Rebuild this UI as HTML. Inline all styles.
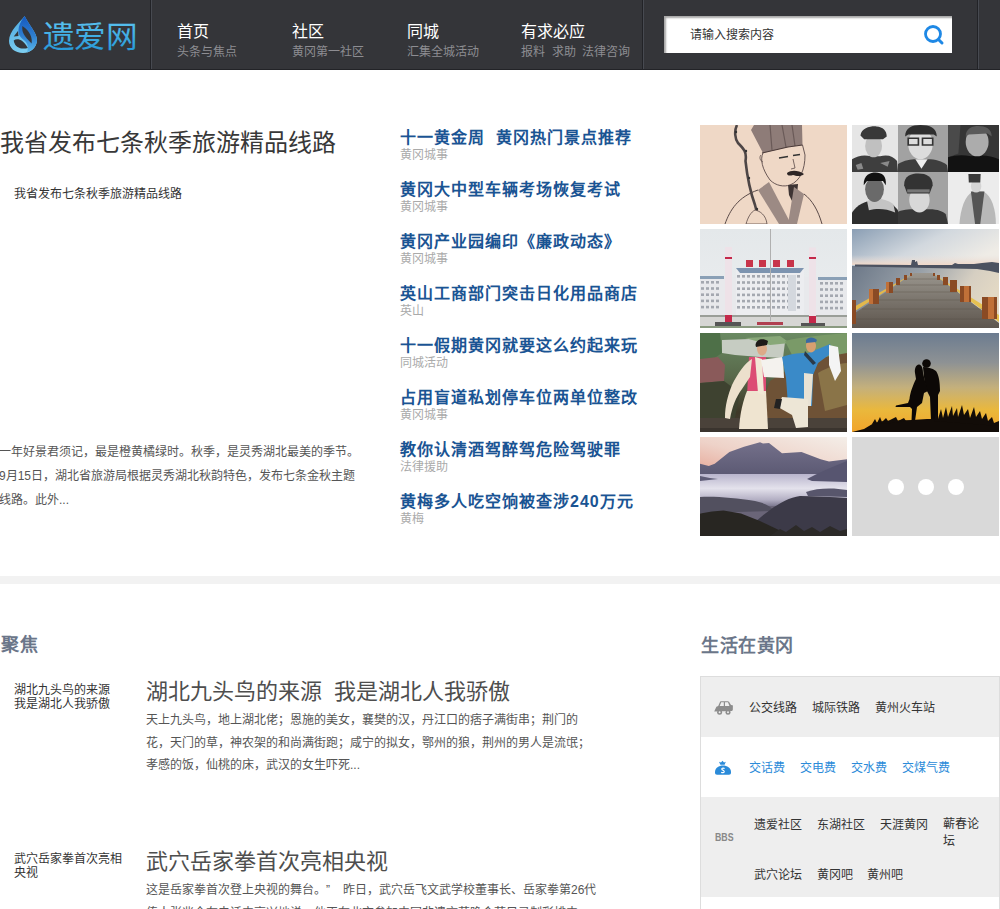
<!DOCTYPE html>
<html lang="zh-CN"><head><meta charset="utf-8">
<style>
*{margin:0;padding:0;box-sizing:border-box}
html,body{width:1000px;height:909px;overflow:hidden;background:#fff;font-family:"Liberation Sans",sans-serif;font-size:12px;color:#333}
.abs{position:absolute;white-space:nowrap}
#hdr{position:absolute;left:0;top:0;width:1000px;height:70px;background:#343539;border-bottom:1px solid #222327}
.sep{position:absolute;top:0;width:2px;height:69px;border-left:1px solid #222327;background:#474a51}
.nav .t{position:absolute;font-size:16px;font-weight:300;color:#fff;line-height:16px;white-space:nowrap}
.nav .s{position:absolute;font-size:12px;color:#8d8d92;line-height:12px;white-space:nowrap}
.search{position:absolute;left:664px;top:16px;width:288px;height:37px;background:#fff;box-shadow:inset 2px 2px 2px rgba(0,0,0,.35)}
.hl{position:absolute;left:400px;font-size:16px;font-weight:bold;color:#1a5493;letter-spacing:1px;line-height:18px;white-space:nowrap;font-family:"Liberation Sans",sans-serif}
.cat{position:absolute;left:400px;font-size:12px;color:#aaa;line-height:12px;white-space:nowrap}
.img{position:absolute;width:147px;height:99px;overflow:hidden}
.img svg{display:block}
.sec{position:absolute;font-family:"Liberation Serif",serif;font-weight:bold;font-size:18px;letter-spacing:0.5px;color:#6b7689;line-height:18px;white-space:nowrap}
.body{position:absolute;left:146px;width:453px;font-size:12px;line-height:22.5px;color:#555}
.atitle{position:absolute;left:146px;font-family:"Liberation Sans",sans-serif;font-weight:300;font-size:22px;color:#4e4e4e;line-height:22px;white-space:nowrap}
.lsmall{position:absolute;left:14px;width:110px;font-size:12px;line-height:14px;color:#333}
.panel{position:absolute;left:700px;top:676px;width:300px;height:240px;border:1px solid #ddd;background:#fff}
.row{position:absolute;left:0;width:298px}
.it{position:absolute;font-size:12px;line-height:12px;white-space:nowrap;color:#333}
.bl{color:#2b8bd9}
</style></head><body>
<div id="hdr">
  <svg class="abs" style="left:0;top:0" width="150" height="70" viewBox="0 0 150 70">
    <defs>
      <linearGradient id="lg1" x1="0" y1="0" x2="0.3" y2="1"><stop offset="0" stop-color="#4aa8e0"/><stop offset="1" stop-color="#7ccdf0"/></linearGradient>
      <linearGradient id="lg3" x1="0" y1="0" x2="0" y2="1"><stop offset="0" stop-color="#1458c0"/><stop offset="0.55" stop-color="#2f7fd0"/><stop offset="1" stop-color="#5ab8ea"/></linearGradient>
      <linearGradient id="lg2" x1="0" y1="0" x2="0" y2="1"><stop offset="0" stop-color="#5cc4f0"/><stop offset="1" stop-color="#2496d6"/></linearGradient>
    </defs>
    <path d="M24.6 16 C20 22 9 31 9 41 C9 48 15 53 23 53 C31 53 37 47 37 40 C37 33 29 25 24.6 16 Z" fill="url(#lg1)"/>
    <path d="M24.6 16 C22 20 19 24 18.5 30 C18 35 21 38 25 41 C28 44 28.5 48 27 52.5 C32 51 37 46 37 40 C37 33 29 25 24.6 16 Z" fill="url(#lg3)"/>
    <path d="M13.7 40.5 C17 38 23 39 27.8 48 C22 49.5 15 48.5 13.7 40.5 Z" fill="#343539"/>
    <path d="M22.4 26 C21.5 32 24 36 31.6 43.5 C32.5 38 30 31 22.4 26 Z" fill="#343539"/>
    <path d="M18 31 L13.7 36.5 L18.5 36 Z" fill="#343539"/>
    <text x="42.5" y="46.5" font-size="30" fill="url(#lg2)" textLength="95" lengthAdjust="spacingAndGlyphs" font-family="Liberation Sans">遗爱网</text>
  </svg>
  <div class="sep" style="left:150px"></div>
  <div class="sep" style="left:642px"></div>
  <div class="sep" style="left:977px"></div>
  <div class="nav">
    <div class="t" style="left:177px;top:24px">首页</div><div class="s" style="left:177px;top:46px">头条与焦点</div>
    <div class="t" style="left:292px;top:24px">社区</div><div class="s" style="left:292px;top:46px">黄冈第一社区</div>
    <div class="t" style="left:407px;top:24px">同城</div><div class="s" style="left:407px;top:46px">汇集全城活动</div>
    <div class="t" style="left:521px;top:24px">有求必应</div><div class="s" style="left:521px;top:46px">报料&nbsp;&nbsp;求助&nbsp;&nbsp;法律咨询</div>
  </div>
  <div class="search">
    <div class="abs" style="left:26px;top:13px;font-size:12px;line-height:12px;color:#333">请输入搜索内容</div>
    <svg class="abs" style="left:258px;top:8px" width="24" height="24" viewBox="0 0 24 24">
      <circle cx="11" cy="10" r="7.5" fill="none" stroke="#1e88e5" stroke-width="2.8"/>
      <line x1="16.5" y1="15.5" x2="20" y2="19" stroke="#1e88e5" stroke-width="3" stroke-linecap="round"/>
    </svg>
  </div>
</div>

<!-- hero left -->
<div class="abs" style="left:0;top:131px;font-family:'Liberation Sans',sans-serif;font-weight:300;font-size:24px;line-height:24px;color:#383838">我省发布七条秋季旅游精品线路</div>
<div class="abs" style="left:14px;top:188px;font-size:12px;line-height:12px;color:#333">我省发布七条秋季旅游精品线路</div>
<div style="position:absolute;left:-1px;top:440px;width:362px;font-size:12px;line-height:24px;color:#555">一年好景君须记，最是橙黄橘绿时。秋季，是灵秀湖北最美的季节。9月15日，湖北省旅游局根据灵秀湖北秋韵特色，发布七条金秋主题线路。此外...</div>

<!-- headlines -->
<div class="hl" style="top:129px">十一黄金周&nbsp;&nbsp;黄冈热门景点推荐</div><div class="cat" style="top:149px">黄冈城事</div>
<div class="hl" style="top:181px">黄冈大中型车辆考场恢复考试</div><div class="cat" style="top:201px">黄冈城事</div>
<div class="hl" style="top:233px">黄冈产业园编印《廉政动态》</div><div class="cat" style="top:253px">黄冈城事</div>
<div class="hl" style="top:285px">英山工商部门突击日化用品商店</div><div class="cat" style="top:305px">英山</div>
<div class="hl" style="top:337px">十一假期黄冈就要这么约起来玩</div><div class="cat" style="top:357px">同城活动</div>
<div class="hl" style="top:389px">占用盲道私划停车位两单位整改</div><div class="cat" style="top:409px">黄冈城事</div>
<div class="hl" style="top:441px">教你认清酒驾醉驾危险驾驶罪</div><div class="cat" style="top:461px">法律援助</div>
<div class="hl" style="top:493px">黄梅多人吃空饷被查涉240万元</div><div class="cat" style="top:513px">黄梅</div>

<!-- images -->
<div class="img" style="left:700px;top:125px;background:#f1dccd"><svg width="147" height="99" viewBox="0 0 147 99">
<rect width="147" height="99" fill="#efd8c6"/>
<path d="M51 5 L54 0 L102 0 L102.5 20 L88 22 L63 28 Z" fill="#8e7c78"/>
<path d="M70 0 L72 25 M82 0 L86 22 M92 0 L95 21" stroke="#6a5a58" stroke-width="1.2"/>
<path d="M62 28 L88 22 L102.5 20" fill="none" stroke="#4a3a38" stroke-width="1.2"/>
<path d="M63 28 C60 34 62 44 70 55 C76 61 84 62 90 60 C100 56 105 45 105 30 L102.5 20" fill="none" stroke="#5a4a48" stroke-width="0.9"/>
<path d="M61 30 C59 32 60 36 63 37" fill="none" stroke="#5a4a48" stroke-width="0.8"/>
<path d="M79 33 L88 31.5 M93 30.5 L100 29.5" stroke="#333" stroke-width="1.4"/>
<path d="M93 34 L95 43 L91 44" fill="none" stroke="#5a4a48" stroke-width="0.8"/>
<path d="M87 48 C91 45 98 45 104 49 C101 52 96 51 93 50 C90 51 87 51 87 48 Z" fill="#2e2626"/>
<path d="M88 60 L98 59 L97 70 L93 78 L89 70 Z" fill="#3e3434"/>
<path d="M37 0 C34 6 35 14 38 18 C44 24 47 27 45.5 36 C47 50 50 66 55 80 C57 88 59 94 60 99" fill="none" stroke="#4e4646" stroke-width="2.6"/>
<circle cx="36" cy="7" r="1.2" fill="#333"/><circle cx="46" cy="26" r="1.2" fill="#333"/><circle cx="49" cy="53" r="1.2" fill="#333"/><circle cx="57" cy="84" r="1.2" fill="#333"/>
<path d="M58 65 L69 57 L91 99 L79 99 Z" fill="#9c8a84"/>
<path d="M94 62 L104 69 L97 99 L88 99 Z" fill="#9c8a84"/>
<path d="M25 99 C30 85 38 72 58 65 M104 69 C112 75 118 85 122 99" fill="none" stroke="#5a4a48" stroke-width="1"/>
<path d="M55 85 C60 86 66 90 67 99 L46 99 C48 92 51 87 55 85 Z" fill="#efd8c6" stroke="#5a4a48" stroke-width="0.8"/>
</svg></div>
<div class="img" style="left:852px;top:125px;background:#888"><svg width="147" height="99" viewBox="0 0 147 99">
<svg x="0" y="0" width="46" height="47" viewBox="0 0 49 49.5" preserveAspectRatio="none">
<rect width="49" height="49.5" fill="#e6e6e6"/>
<path d="M0 36 C6 32 14 31 20 33 L30 33 C38 31 44 33 48 38 L49 49.5 L0 49.5 Z" fill="#3e3e3e"/>
<path d="M4 42 L10 40 L12 46 L6 47 Z M30 40 L40 38 L38 44 Z" fill="#8a8a8a"/>
<ellipse cx="23" cy="22" rx="9" ry="12" fill="#c0c0c0"/>
<path d="M9 11 C10 3 20 1 26 1.5 C33 2 37 6 37 12 L33 15 L13 15 Z" fill="#383838"/>
</svg>
<svg x="46" y="0" width="50" height="47" viewBox="0 0 49 49.5" preserveAspectRatio="none">
<rect width="49" height="49.5" fill="#a2a2a2"/>
<path d="M0 41 C6 37 13 36 17 36 L29 36 C37 36 43 38 48 42 L49 49.5 L0 49.5 Z" fill="#3e3e3e"/>
<path d="M17 36 L23 46 L29 36 Z" fill="#eee"/>
<ellipse cx="22" cy="20" rx="12" ry="16" fill="#dcdcdc"/>
<path d="M7 12 C7 3 14 0 22 0 C31 0 38 3 38 12 L35 10 L10 10 Z" fill="#2e2e2e"/>
<path d="M10 14 L20 14 L20 21 L10 21 Z M24 14 L34 14 L34 21 L24 21 Z" fill="none" stroke="#333" stroke-width="1.6"/>
</svg>
<svg x="96" y="0" width="51" height="47" viewBox="0 0 49 49.5" preserveAspectRatio="none">
<rect width="49" height="49.5" fill="#363636"/>
<path d="M0 0 L12 0 L10 30 L0 34 Z" fill="#4a4a4a"/>
<path d="M0 34 C6 32 14 31 22 33 C32 31 42 32 49 36 L49 49.5 L0 49.5 Z" fill="#121212"/>
<ellipse cx="28" cy="18" rx="11" ry="15" fill="#acacac"/>
<path d="M17 12 C17 3 24 1 29 1 C36 1 42 4 42 12 L38 9 L20 10 Z" fill="#5a5a5a"/>
</svg>
<svg x="0" y="47" width="46" height="52" viewBox="0 49.5 49 49.5" preserveAspectRatio="none">
<rect y="49.5" width="49" height="49.5" fill="#e0e0e0"/>
<path d="M0 88 C6 80 14 77 22 77 L30 77 C40 77 46 82 49 86 L49 99 L0 99 Z" fill="#2e2e2e"/>
<path d="M16 77 C24 74 34 74 44 80 L46 88 C36 84 26 84 18 86 Z" fill="#c4c4c4"/>
<ellipse cx="24" cy="66" rx="10" ry="12" fill="#6a6a6a"/>
<path d="M12.5 62 C12 52 20 50 25 50 C32 50 37 53 36 62 L33 58 L16 58 Z" fill="#111"/>
</svg>
<svg x="46" y="47" width="50" height="52" viewBox="49 49.5 49 49.5" preserveAspectRatio="none">
<rect x="49" y="49.5" width="49" height="49.5" fill="#a2a2a2"/>
<path d="M47 88 C54 85 62 85 66 85 L80 85 C88 85 93 87 96 90 L98 99 L47 99 Z" fill="#383838"/>
<ellipse cx="70" cy="76" rx="10" ry="12" fill="#d8d8d8"/>
<path d="M55 62 C55 53 62 51 69 51 C77 51 83 54 83 62 L80 70 L58 70 Z" fill="#333"/>
<path d="M58 66 L80 66 L80 69 L58 69 Z" fill="#777"/>
</svg>
<svg x="96" y="47" width="51" height="52" viewBox="98 49.5 49 49.5" preserveAspectRatio="none">
<rect x="98" y="49.5" width="49" height="49.5" fill="#ececec"/>
<path d="M109 99 C110 85 114 72 122 68 L132 68 C140 72 144 85 144 99 Z" fill="#b8b8b8"/>
<path d="M120 68 L124 99 L129 99 L133 68 Z" fill="#555"/>
<ellipse cx="125" cy="63" rx="5" ry="6" fill="#d4d4d4"/>
<path d="M117.6 51.5 L129.4 51.5 L129 59.6 L118 59.6 Z" fill="#3a3a3a"/>
</svg>
</svg></div>
<div class="img" style="left:700px;top:229px;background:#dfe6ea"><svg width="147" height="99" viewBox="0 0 147 99">
<defs><linearGradient id="sk3" x1="0" y1="0" x2="0" y2="1"><stop offset="0" stop-color="#e4e8ea"/><stop offset="1" stop-color="#eceef0"/></linearGradient></defs>
<rect width="147" height="99" fill="url(#sk3)"/>
<rect x="0" y="48" width="147" height="40" fill="#e8e9ec"/>
<rect x="36" y="41" width="68" height="47" fill="#ecedf0"/>
<path d="M36 39 L104 39 L100 44 L40 44 Z" fill="#7d94b0"/>
<path d="M0 47 L24 47 L24 50 L0 50 Z M118 48 L147 48 L147 51 L118 51 Z" fill="#8aa0b6"/>
<g fill="#a4a8b0"><rect x="1" y="52" width="3" height="2.6"/><rect x="6" y="52" width="3" height="2.6"/><rect x="11" y="52" width="3" height="2.6"/><rect x="16" y="52" width="3" height="2.6"/><rect x="1" y="58.2" width="3" height="2.6"/><rect x="6" y="58.2" width="3" height="2.6"/><rect x="11" y="58.2" width="3" height="2.6"/><rect x="16" y="58.2" width="3" height="2.6"/><rect x="1" y="64.4" width="3" height="2.6"/><rect x="6" y="64.4" width="3" height="2.6"/><rect x="11" y="64.4" width="3" height="2.6"/><rect x="16" y="64.4" width="3" height="2.6"/><rect x="1" y="70.6" width="3" height="2.6"/><rect x="6" y="70.6" width="3" height="2.6"/><rect x="11" y="70.6" width="3" height="2.6"/><rect x="16" y="70.6" width="3" height="2.6"/><rect x="1" y="76.8" width="3" height="2.6"/><rect x="6" y="76.8" width="3" height="2.6"/><rect x="11" y="76.8" width="3" height="2.6"/><rect x="16" y="76.8" width="3" height="2.6"/><rect x="37" y="46" width="3" height="2.6"/><rect x="42" y="46" width="3" height="2.6"/><rect x="47" y="46" width="3" height="2.6"/><rect x="52" y="46" width="3" height="2.6"/><rect x="57" y="46" width="3" height="2.6"/><rect x="62" y="46" width="3" height="2.6"/><rect x="67" y="46" width="3" height="2.6"/><rect x="72" y="46" width="3" height="2.6"/><rect x="77" y="46" width="3" height="2.6"/><rect x="82" y="46" width="3" height="2.6"/><rect x="87" y="46" width="3" height="2.6"/><rect x="92" y="46" width="3" height="2.6"/><rect x="97" y="46" width="3" height="2.6"/><rect x="37" y="52.2" width="3" height="2.6"/><rect x="42" y="52.2" width="3" height="2.6"/><rect x="47" y="52.2" width="3" height="2.6"/><rect x="52" y="52.2" width="3" height="2.6"/><rect x="57" y="52.2" width="3" height="2.6"/><rect x="62" y="52.2" width="3" height="2.6"/><rect x="67" y="52.2" width="3" height="2.6"/><rect x="72" y="52.2" width="3" height="2.6"/><rect x="77" y="52.2" width="3" height="2.6"/><rect x="82" y="52.2" width="3" height="2.6"/><rect x="87" y="52.2" width="3" height="2.6"/><rect x="92" y="52.2" width="3" height="2.6"/><rect x="97" y="52.2" width="3" height="2.6"/><rect x="37" y="58.4" width="3" height="2.6"/><rect x="42" y="58.4" width="3" height="2.6"/><rect x="47" y="58.4" width="3" height="2.6"/><rect x="52" y="58.4" width="3" height="2.6"/><rect x="57" y="58.4" width="3" height="2.6"/><rect x="62" y="58.4" width="3" height="2.6"/><rect x="67" y="58.4" width="3" height="2.6"/><rect x="72" y="58.4" width="3" height="2.6"/><rect x="77" y="58.4" width="3" height="2.6"/><rect x="82" y="58.4" width="3" height="2.6"/><rect x="87" y="58.4" width="3" height="2.6"/><rect x="92" y="58.4" width="3" height="2.6"/><rect x="97" y="58.4" width="3" height="2.6"/><rect x="37" y="64.6" width="3" height="2.6"/><rect x="42" y="64.6" width="3" height="2.6"/><rect x="47" y="64.6" width="3" height="2.6"/><rect x="52" y="64.6" width="3" height="2.6"/><rect x="57" y="64.6" width="3" height="2.6"/><rect x="62" y="64.6" width="3" height="2.6"/><rect x="67" y="64.6" width="3" height="2.6"/><rect x="72" y="64.6" width="3" height="2.6"/><rect x="77" y="64.6" width="3" height="2.6"/><rect x="82" y="64.6" width="3" height="2.6"/><rect x="87" y="64.6" width="3" height="2.6"/><rect x="92" y="64.6" width="3" height="2.6"/><rect x="97" y="64.6" width="3" height="2.6"/><rect x="37" y="70.8" width="3" height="2.6"/><rect x="42" y="70.8" width="3" height="2.6"/><rect x="47" y="70.8" width="3" height="2.6"/><rect x="52" y="70.8" width="3" height="2.6"/><rect x="57" y="70.8" width="3" height="2.6"/><rect x="62" y="70.8" width="3" height="2.6"/><rect x="67" y="70.8" width="3" height="2.6"/><rect x="72" y="70.8" width="3" height="2.6"/><rect x="77" y="70.8" width="3" height="2.6"/><rect x="82" y="70.8" width="3" height="2.6"/><rect x="87" y="70.8" width="3" height="2.6"/><rect x="92" y="70.8" width="3" height="2.6"/><rect x="97" y="70.8" width="3" height="2.6"/><rect x="37" y="77" width="3" height="2.6"/><rect x="42" y="77" width="3" height="2.6"/><rect x="47" y="77" width="3" height="2.6"/><rect x="52" y="77" width="3" height="2.6"/><rect x="57" y="77" width="3" height="2.6"/><rect x="62" y="77" width="3" height="2.6"/><rect x="67" y="77" width="3" height="2.6"/><rect x="72" y="77" width="3" height="2.6"/><rect x="77" y="77" width="3" height="2.6"/><rect x="82" y="77" width="3" height="2.6"/><rect x="87" y="77" width="3" height="2.6"/><rect x="92" y="77" width="3" height="2.6"/><rect x="97" y="77" width="3" height="2.6"/><rect x="120" y="53" width="3" height="2.6"/><rect x="125" y="53" width="3" height="2.6"/><rect x="130" y="53" width="3" height="2.6"/><rect x="135" y="53" width="3" height="2.6"/><rect x="140" y="53" width="3" height="2.6"/><rect x="120" y="59.2" width="3" height="2.6"/><rect x="125" y="59.2" width="3" height="2.6"/><rect x="130" y="59.2" width="3" height="2.6"/><rect x="135" y="59.2" width="3" height="2.6"/><rect x="140" y="59.2" width="3" height="2.6"/><rect x="120" y="65.4" width="3" height="2.6"/><rect x="125" y="65.4" width="3" height="2.6"/><rect x="130" y="65.4" width="3" height="2.6"/><rect x="135" y="65.4" width="3" height="2.6"/><rect x="140" y="65.4" width="3" height="2.6"/><rect x="120" y="71.6" width="3" height="2.6"/><rect x="125" y="71.6" width="3" height="2.6"/><rect x="130" y="71.6" width="3" height="2.6"/><rect x="135" y="71.6" width="3" height="2.6"/><rect x="140" y="71.6" width="3" height="2.6"/><rect x="120" y="77.8" width="3" height="2.6"/><rect x="125" y="77.8" width="3" height="2.6"/><rect x="130" y="77.8" width="3" height="2.6"/><rect x="135" y="77.8" width="3" height="2.6"/><rect x="140" y="77.8" width="3" height="2.6"/></g>
<rect x="88" y="46" width="8" height="36" fill="#d4d8de"/>
<rect x="0" y="86" width="147" height="2" fill="#9a9e98"/>
<rect x="0" y="88" width="147" height="9" fill="#d6d6d4"/>
<rect x="0" y="97" width="147" height="2" fill="#8a9a80"/>
<g fill="#c8344a"><rect x="46" y="31" width="7" height="7"/><rect x="59" y="31" width="7" height="7"/><rect x="73" y="31" width="7" height="7"/><rect x="87" y="31" width="7" height="7"/></g>
<rect x="25" y="18" width="7" height="76" fill="#eee2e8"/><rect x="25" y="86" width="7" height="8" fill="#c4284a"/><rect x="25" y="28" width="7" height="2" fill="#c4284a"/>
<rect x="109" y="18.5" width="7" height="76" fill="#eee2e8"/><rect x="109" y="87" width="7" height="7" fill="#c4284a"/><rect x="109" y="28" width="7" height="2" fill="#c4284a"/>
<rect x="15" y="93" width="26" height="4" fill="#555"/><rect x="101" y="94" width="24" height="3" fill="#555"/>
<rect x="57" y="93" width="26" height="3" fill="#b04050"/>
<rect x="70" y="0" width="1" height="92" fill="#b0b0b0"/>
</svg></div>
<div class="img" style="left:852px;top:229px;background:#7b7f85"><svg width="147" height="99" viewBox="0 0 147 99">
<defs>
<linearGradient id="sk4" x1="0" y1="0" x2="1" y2="0.5"><stop offset="0" stop-color="#8a9eb4"/><stop offset="0.55" stop-color="#d2d8de"/><stop offset="1" stop-color="#efece6"/></linearGradient>
<linearGradient id="wt4" x1="0" y1="0" x2="1" y2="0.3"><stop offset="0" stop-color="#6c7888"/><stop offset="0.45" stop-color="#98a0a8"/><stop offset="0.8" stop-color="#d6cfc2"/><stop offset="1" stop-color="#e2d8c4"/></linearGradient>
<linearGradient id="pr4" x1="0" y1="0" x2="0" y2="1"><stop offset="0" stop-color="#9a968e"/><stop offset="0.5" stop-color="#7a746c"/><stop offset="1" stop-color="#5e564e"/></linearGradient>
<linearGradient id="hz4" x1="0" y1="0" x2="0" y2="1"><stop offset="0" stop-color="#e8e0dc" stop-opacity="0"/><stop offset="1" stop-color="#f0d8c8"/></linearGradient>
</defs>
<rect width="147" height="38" fill="url(#sk4)"/>
<rect x="0" y="26" width="147" height="10" fill="url(#hz4)"/>
<rect x="0" y="37" width="147" height="62" fill="url(#wt4)"/>
<path d="M3 35.5 L59 36 L60 31 L63 31 L63 33 L65 32 L66 36 L100 36 L103 34 L106 35 L122 35 L130 34 L140 33 L147 34 L147 44 L138 42 L125 40 L3 37.5 Z" fill="#4c5260"/>
<path d="M0 79 L62 44 L0 84 Z" fill="#e2b84c"/>
<path d="M80 44 L147 86 L147 93 Z" fill="#e6c050"/>
<path d="M62 44 L80 44 L147 94 L147 99 L0 99 L0 86 Z" fill="url(#pr4)"/>
<g stroke="#585048" stroke-width="0.6" opacity="0.6">
<line x1="55" y1="50" x2="88" y2="50"/><line x1="45" y1="56" x2="96" y2="56"/><line x1="34" y1="63" x2="106" y2="63"/><line x1="22" y1="71" x2="118" y2="71"/><line x1="10" y1="80" x2="130" y2="80"/><line x1="0" y1="90" x2="143" y2="90"/>
</g>
<g fill="#8a4a24">
<rect x="17" y="60" width="10" height="15"/><rect x="34" y="53" width="7" height="11"/><rect x="44" y="49" width="4" height="7"/><rect x="52" y="46" width="3" height="5"/><rect x="58" y="44" width="2" height="3"/>
<rect x="108" y="57" width="11" height="16"/><rect x="98" y="51" width="7" height="12"/><rect x="91" y="48" width="5" height="8"/><rect x="85" y="46" width="3" height="5"/><rect x="81" y="44" width="2" height="3"/>
<rect x="0" y="71" width="4" height="24"/><rect x="130" y="68" width="15" height="22"/>
</g>
<g fill="#c07038"><rect x="17" y="60" width="4" height="15"/><rect x="34" y="53" width="3" height="11"/><rect x="112" y="57" width="5" height="16"/><rect x="136" y="68" width="6" height="22"/></g>
</svg></div>
<div class="img" style="left:700px;top:333px;background:#6a6a50"><svg width="147" height="99" viewBox="0 0 147 99">
<defs><linearGradient id="bg5" x1="0" y1="0" x2="0" y2="1"><stop offset="0" stop-color="#6a8a62"/><stop offset="0.45" stop-color="#58684a"/><stop offset="0.8" stop-color="#3e3828"/><stop offset="1" stop-color="#484038"/></linearGradient></defs>
<rect width="147" height="99" fill="url(#bg5)"/>
<path d="M22 7 L50 6 L85 9 L83 25 L60 24 L35 22 L22 20 Z" fill="#c6ccc2"/>
<path d="M45 5 L80 3 L90 10 L70 12 Z" fill="#88a878"/>
<path d="M0 0 L20 0 L22 20 L10 28 L0 26 Z" fill="#4e7048"/>
<path d="M0 26 L18 24 L25 32 L24 48 L0 50 Z" fill="#8a5a5a"/>
<path d="M85 8 C100 4 125 2 147 0 L147 30 L120 32 L95 28 Z" fill="#7a9a68"/>
<path d="M70 48 C85 38 105 28 125 24 L147 20 L147 85 L60 85 C62 70 66 58 70 48 Z" fill="#6e5236"/>
<path d="M118 40 C128 34 140 30 147 30 L147 72 L125 78 Z" fill="#8a7448"/>
<path d="M0 50 L24 48 L40 60 L35 85 L0 85 Z" fill="#3e4230"/>
<rect x="0" y="85" width="147" height="14" fill="#4a423a"/>
<rect x="0" y="95" width="147" height="4" fill="#3a342e"/>
<path d="M49 24 L66 24 L66 62 L47 63 Z" fill="#dc4c74"/>
<path d="M52 26 C45 30 38 40 32 52 C28 62 25 72 25 85 L30 86 C32 74 36 64 42 56 L50 44 Z" fill="#ece0cc"/>
<path d="M47 58 L66 58 L68 96 L39 96 C40 80 43 68 47 58 Z" fill="#efe4d0"/>
<path d="M55 24 L62 26 L64 62 L58 60 Z" fill="#f2e8d6"/>
<ellipse cx="62" cy="16" rx="5" ry="6.5" fill="#dcaa88"/>
<path d="M55.5 12 C56 6 63 4.5 68 8 L67 12 L56 14 Z" fill="#1e1a18"/>
<path d="M61 27 L83 24 L84 45 L64 44 Z" fill="#f4f2ee"/>
<path d="M82 24 C92 20 102 20 108 20 L118 16 L130 11 L133 19 L118 30 L113 42 L112 73 L88 72 L86 45 Z" fill="#3a8ac8"/>
<path d="M129 12 L138 14 L141 38 L135 48 L129 32 Z" fill="#f4f4f4"/>
<path d="M104 40 L113 41 L111 73 L104 73 Z" fill="#e8e2d4"/>
<path d="M82 64 L108 66 L108 94 L96 95 L92 82 L78 74 Z" fill="#ede6d6"/>
<path d="M76 66 L82 66 L80 76 L74 75 Z" fill="#222"/>
<ellipse cx="111" cy="13" rx="5" ry="6.5" fill="#d8a070"/>
<path d="M106 7 C108 3.5 114 3.5 117 7 L116 9 L106 10 Z" fill="#3a6aa0"/>
<path d="M105 18 L116 30 L113 32 L104 22 Z" fill="#2a3a4a"/>
</svg></div>
<div class="img" style="left:852px;top:333px;background:#c0a060"><svg width="147" height="99" viewBox="0 0 147 99">
<defs><linearGradient id="bg6" x1="0" y1="0" x2="0" y2="1"><stop offset="0" stop-color="#6c7c90"/><stop offset="0.3" stop-color="#8e9294"/><stop offset="0.55" stop-color="#c4b07c"/><stop offset="0.78" stop-color="#eab83c"/><stop offset="1" stop-color="#f2a42a"/></linearGradient></defs>
<rect width="147" height="99" fill="url(#bg6)"/>
<circle cx="74.5" cy="30.5" r="4.3" fill="#0c0806"/>
<path d="M71 34 C75 34 80 35 84 38 C87 42 88 50 88 58 L86 62 L86 88 L79 88 L78 64 L74 56 L72 44 Z" fill="#0c0806"/>
<path d="M67 31.5 C63.5 32 62.5 36 63 40 L64 46 C61 52 58 60 57.5 66 L56 70 L44 72.5 L43.5 74 L58 74 L60 76 L59.5 88 L63 88 L65 74 L70 70 L72 60 L76 58 L73 48 L71 40 C71 36 70 32 67 31.5 Z" fill="#0c0806"/>
<path d="M0 99 L12 96 L22 90 L32 88 L60 87 L75 86 L90 86 L110 87 L125 88 L140 91 L147 92 L147 99 Z" fill="#120c08"/>
<path d="M82 88 L84 80 L86 86 L89 76 L91 85 L94 74 L96 84 L100 73 L101 83 L105 75 L106 84 L110 72 L112 82 L116 76 L118 85 L122 74 L124 84 L128 78 L130 86 L134 80 L136 88 L140 84 L142 90 L147 88 L147 93 Z" fill="#120c08"/>
<path d="M20 91 L23 86 L25 90 L28 84 L30 89 L34 85 L36 88 L44 84 L46 88 L52 85 L54 88 L40 90 Z" fill="#120c08"/>
</svg></div>
<div class="img" style="left:700px;top:437px;background:#6a6578"><svg width="147" height="99" viewBox="0 0 147 99">
<defs>
<linearGradient id="sk7" x1="0" y1="1" x2="1" y2="0"><stop offset="0" stop-color="#e6a494"/><stop offset="0.45" stop-color="#eed2c8"/><stop offset="1" stop-color="#f4eee8"/></linearGradient>
<linearGradient id="mt7" x1="0" y1="0" x2="0" y2="1"><stop offset="0" stop-color="#74708a"/><stop offset="1" stop-color="#5a5872"/></linearGradient>
<linearGradient id="fg7" x1="0" y1="0" x2="0" y2="1"><stop offset="0" stop-color="#b8b4cc"/><stop offset="0.45" stop-color="#e4e2ec"/><stop offset="0.8" stop-color="#b4b0c4"/><stop offset="1" stop-color="#7e7a90"/></linearGradient>
</defs>
<rect width="147" height="40" fill="url(#sk7)"/>
<path d="M0 26.7 L8.8 29 L14.7 26.7 L29.4 14.9 L44 9.7 L60 5.2 L63 6.5 L69 5.9 L82 16.3 L101.5 14.9 L120.6 22.3 L129 24.5 L147 22.3 L147 40 L0 40 Z" fill="url(#mt7)"/>
<rect x="0" y="37" width="147" height="32" fill="url(#fg7)"/>
<path d="M107 42 C118 36 132 30 147 24 L147 45 L112 44 Z" fill="#575570"/>
<path d="M0 39 L10 41 L18 42 L0 44 Z" fill="#5e5c76"/>
<path d="M106 55 C114 52 124 51 134 51.5 L147 53 L147 60 L108 59 Z" fill="#58566c"/>
<path d="M0 60 C15 59 35 61 55 64 C65 66 72 70 74 74 L0 76 Z" fill="#52505f"/>
<path d="M55 85 C70 72 85 61 100 59 C115 59 132 60 147 61 L147 99 L55 99 Z" fill="#3c3a48"/>
<path d="M0 76.5 L12 74.5 L23.5 73.5 L41 76.5 L60 84 L81 94 L84 99 L0 99 Z" fill="#282622"/>
<path d="M70 99 L80 92 L86 95 L96 88 L104 94 L112 90 L120 95 L130 89 L140 94 L147 92 L147 99 Z" fill="#2c2a28"/>
</svg></div>
<div class="img" style="left:852px;top:437px;background:#d9d9d9">
  <div style="position:absolute;left:36px;top:42px;width:16px;height:16px;border-radius:50%;background:#fff"></div>
  <div style="position:absolute;left:66px;top:42px;width:16px;height:16px;border-radius:50%;background:#fff"></div>
  <div style="position:absolute;left:96px;top:42px;width:16px;height:16px;border-radius:50%;background:#fff"></div>
</div>

<div style="position:absolute;left:0;top:576px;width:1000px;height:8px;background:#f2f2f2"></div>

<!-- focus -->
<div class="sec" style="left:1px;top:636px">聚焦</div>
<div class="lsmall" style="top:683px">湖北九头鸟的来源 我是湖北人我骄傲</div>
<div class="atitle" style="top:681px">湖北九头鸟的来源&nbsp;&nbsp;我是湖北人我骄傲</div>
<div class="body" style="top:709px">天上九头鸟，地上湖北佬；恩施的美女，襄樊的汉，丹江口的痞子满街串；荆门的花，天门的草，神农架的和尚满街跑；咸宁的拟女，鄂州的狼，荆州的男人是流氓；孝感的饭，仙桃的床，武汉的女生吓死...</div>

<div class="lsmall" style="top:852px">武穴岳家拳首次亮相 央视</div>
<div class="atitle" style="top:851px">武穴岳家拳首次亮相央视</div>
<div class="body" style="top:879px">这是岳家拳首次登上央视的舞台。<span style="display:inline-block;width:12px;margin-right:5px">”</span>昨日，武穴岳飞文武学校董事长、岳家拳第26代传人张兆全在电话中高兴地说，他正在北京参加中国非遗文艺晚会节目录制彩排中。</div>

<!-- life panel -->
<div class="sec" style="left:701px;top:637px">生活在黄冈</div>
<div class="panel">
  <div class="row" style="top:0;height:60px;background:#eee"></div>
  <div class="row" style="top:120px;height:100px;background:#eee"></div>
</div>
<svg class="abs" style="left:713px;top:699px" width="22" height="18" viewBox="0 0 22 18">
  <path fill-rule="evenodd" d="M1.2 12.6 L3.4 7.8 L5.2 7 L7.2 2.4 Q7.6 2.2 8.2 2.2 L14.8 2.2 Q15.5 2.2 16 2.8 L18 6 L19.6 6.2 Q19.9 6.5 19.9 7 L19.8 11 L19 12 Z M6.7 7 L8.2 3.2 L10.8 3.2 L10.8 7 Z M12 3.2 L15 3.2 L16.4 7 L12 7 Z" fill="#8c8c8c"/>
  <circle cx="6.6" cy="13.2" r="2.5" fill="#8c8c8c"/><circle cx="6.6" cy="13.2" r="1" fill="#eee"/>
  <circle cx="15" cy="13.2" r="2.5" fill="#8c8c8c"/><circle cx="15" cy="13.2" r="1" fill="#eee"/>
</svg>
<div class="it" style="left:749px;top:702px">公交线路</div>
<div class="it" style="left:812px;top:702px">城际铁路</div>
<div class="it" style="left:875px;top:702px">黄州火车站</div>
<svg class="abs" style="left:714px;top:760px" width="18" height="16" viewBox="0 0 18 16">
  <path d="M5 1.8 L7 2.4 L8.5 0.8 L10 2.4 L11.8 1.8 L10.6 4.8 L6.4 4.8 Z" fill="#2b8bd9"/>
  <path d="M1 12 C1 8 5 5.6 9 5.6 C13 5.6 17 8 17 12 L17 13 Q17 14.8 15 14.8 L3 14.8 Q1 14.8 1 13 Z" fill="#2b8bd9"/>
  <path d="M10.6 8.6 Q9.5 7.8 8.4 8.2 Q7.3 8.8 8.2 9.8 L9.8 10.8 Q10.8 11.8 9.6 12.5 Q8.4 13 7.2 12.2" fill="none" stroke="#fff" stroke-width="1.2"/>
</svg>
<div class="it bl" style="left:749px;top:762px">交话费</div>
<div class="it bl" style="left:800px;top:762px">交电费</div>
<div class="it bl" style="left:851px;top:762px">交水费</div>
<div class="it bl" style="left:902px;top:762px">交煤气费</div>
<div class="it" style="left:715px;top:832px;font-size:11px;line-height:11px;color:#888;font-weight:bold;transform:scaleX(0.8);transform-origin:left">BBS</div>
<div class="it" style="left:754px;top:819px">遗爱社区</div>
<div class="it" style="left:817px;top:819px">东湖社区</div>
<div class="it" style="left:880px;top:819px">天涯黄冈</div>
<div class="it" style="left:943px;white-space:normal;width:40px;line-height:17px;top:816px">蕲春论坛</div>
<div class="it" style="left:754px;top:869px">武穴论坛</div>
<div class="it" style="left:817px;top:869px">黄冈吧</div>
<div class="it" style="left:867px;top:869px">黄州吧</div>
</body></html>
